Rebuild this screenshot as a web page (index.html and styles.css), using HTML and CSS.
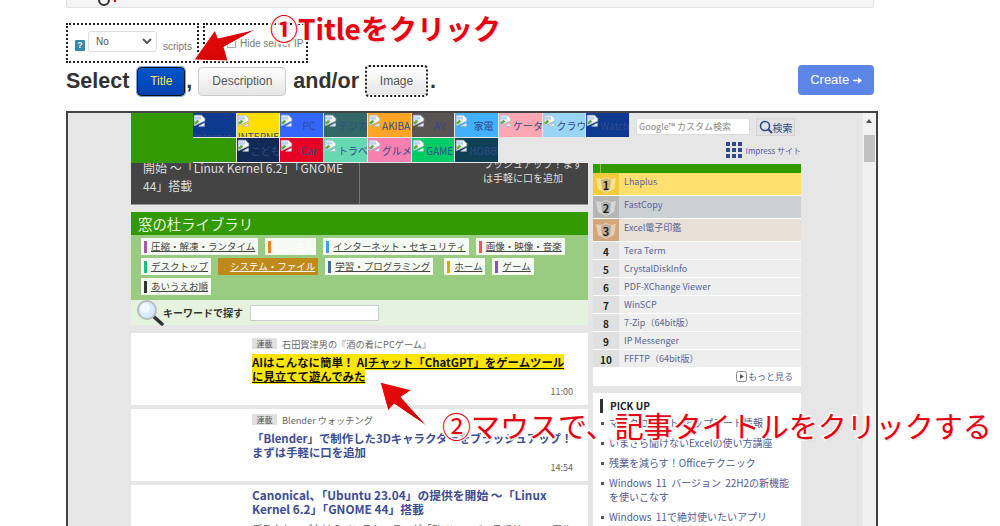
FILE: index.html
```html
<!DOCTYPE html>
<html lang="ja">
<head>
  <meta charset="UTF-8">
  <title>Titleをクリック</title>
  <link rel="stylesheet" href="styles.css">
</head>
<body>

<svg class="defs" width="0" height="0">
  <symbol id="broken" viewBox="0 0 16 16">
    <path d="M1.5 1.5h9l4 4v3l-13 6z" fill="#fff" stroke="#a9b4c4"/>
    <path d="M2 3h8v4H2z" fill="#b9d4f2"/>
    <path d="M2 13v-3l3-3 3 2-3 3z" fill="#5fae4c"/>
    <path d="M7 15l7-4v4z" fill="#fff" stroke="#a9b4c4"/>
  </symbol>
  <symbol id="medal" viewBox="0 0 26 22">
    <path d="M3 5l5 1 5-2 5 2 5-1-2 11-8 4-8-4z" fill="#fff" fill-opacity=".45"/>
    <path d="M8 7l5-2 5 2-1 9-4 3-4-3z" fill="#000" fill-opacity=".18"/>
  </symbol>
</svg>

<div class="page">
  <div class="topbar"><span class="topbar-icon"></span><span class="topbar-dot"></span></div>

  <div class="options">
    <div class="dotted opt-scripts">
      <span class="help">?</span>
      <span class="fake-select">No<svg width="10" height="6" viewBox="0 0 10 6"><path d="M1 1l4 4 4-4" fill="none" stroke="#555" stroke-width="2"/></svg></span>
      <span class="opt-label">scripts</span>
    </div>
    <div class="dotted opt-ip">
      <span class="check"></span>
      <span class="opt-label">Hide server IP</span>
    </div>
  </div>

  <div class="select-row">
    <span class="word">Select</span>
    <button class="btn btn-on">Title</button>
    <span class="word comma">,</span>
    <button class="btn btn-desc">Description</button>
    <span class="word and">and/or</span>
    <button class="btn btn-img">Image</button>
    <span class="word dot">.</span>
    <button class="create">Create
      <svg width="9" height="7" viewBox="0 0 11 8"><path d="M0 3h6V0l5 4-5 4V5H0z" fill="#fff"/></svg>
    </button>
  </div>

  <div class="frame">
    <div class="site">
      <div class="nav">
        <div class="nav-logo"></div>
        <div class="nav-tiles">
          <a class="tile t-watch"><svg class="bi"><use href="#broken"/></svg><span class="low">Internet</span></a>
          <a class="tile t-inet"><svg class="bi"><use href="#broken"/></svg><span class="low">INTERNET</span></a>
          <a class="tile t-pc"><svg class="bi"><use href="#broken"/></svg>PC</a>
          <a class="tile t-deji"><svg class="bi"><use href="#broken"/></svg>デジカ</a>
          <a class="tile t-akiba"><svg class="bi"><use href="#broken"/></svg>AKIBA</a>
          <a class="tile t-av"><svg class="bi"><use href="#broken"/></svg>AV</a>
          <a class="tile t-kaden"><svg class="bi"><use href="#broken"/></svg>家電</a>
          <a class="tile t-keita"><svg class="bi"><use href="#broken"/></svg>ケータ</a>
          <a class="tile t-cloud"><svg class="bi"><use href="#broken"/></svg>クラウ</a>
          <a class="tile t-watch"><svg class="bi"><use href="#broken"/></svg>Watch</a>
          <a class="tile t-green"></a>
          <a class="tile t-kodomo"><svg class="bi"><use href="#broken"/></svg>こども</a>
          <a class="tile t-car"><svg class="bi"><use href="#broken"/></svg>Car</a>
          <a class="tile t-trave"><svg class="bi"><use href="#broken"/></svg>トラベ</a>
          <a class="tile t-gourmet"><svg class="bi"><use href="#broken"/></svg>グルメ</a>
          <a class="tile t-game"><svg class="bi"><use href="#broken"/></svg>GAME</a>
          <a class="tile t-hobby"><svg class="bi"><use href="#broken"/></svg>HOBBY</a>
        </div>
        <div class="nav-right">
          <div class="nav-search">
            <span class="g-box">Google™ カスタム検索</span>
            <span class="g-btn">
              <svg width="14" height="14" viewBox="0 0 14 14"><circle cx="6" cy="6" r="4.5" fill="none" stroke="#2b4a8c" stroke-width="1.6"/><path d="M9.3 9.3L13 13" stroke="#2b4a8c" stroke-width="2"/></svg>検索
            </span>
          </div>
          <div class="impress">
            <span class="dots"><i></i><i></i><i></i><i></i><i></i><i></i><i></i><i></i><i></i></span>
            Impress サイト
          </div>
        </div>
      </div>

      <div class="cols">
        <div class="main">
          <div class="feature">
            <div class="f-left">開始 〜「Linux Kernel 6.2」「GNOME 44」搭載</div>
            <div class="f-right">ラッシュアップ！まず<br>は手軽に口を追加</div>
          </div>

          <div class="library">
            <h3>窓の杜ライブラリ</h3>
            <div class="tags">
              <a class="tag" style="--c:#a855a8">圧縮・解凍・ランタイム</a>
              <a class="tag tag-biz" style="--c:#e8821e">ビジネス</a>
              <a class="tag" style="--c:#3f9fe8">インターネット・セキュリティ</a>
              <a class="tag" style="--c:#ee5555">画像・映像・音楽</a>
              <a class="tag" style="--c:#22bb88">デスクトップ</a>
              <a class="tag tag-on" style="--c:#c08a1a">システム・ファイル</a>
              <a class="tag" style="--c:#44689c">学習・プログラミング</a>
              <a class="tag tag-home" style="--c:#c8b400">ホーム</a>
              <a class="tag" style="--c:#8a55b0">ゲーム</a>
              <a class="tag" style="--c:#333">あいうえお順</a>
            </div>
            <div class="kw">
              <svg class="kw-icon" width="30" height="26" viewBox="0 0 30 26"><path d="M17 16l9 8" stroke="#333" stroke-width="3.5" stroke-linecap="round"/><circle cx="11" cy="10" r="9" fill="#d8ecfa" stroke="#b8bcc0" stroke-width="2"/><circle cx="9" cy="8" r="5" fill="#f2faff"/></svg>
              <b>キーワードで探す</b>
              <span class="kw-input"></span>
            </div>
          </div>

          <div class="card">
            <div class="c-meta"><span class="c-tag">連載</span>石田賀津男の『酒の肴にPCゲーム』</div>
            <a class="c-title"><span class="hot">AIはこんなに簡単！ AIチャット「ChatGPT」をゲームツール<br>に見立てて遊んでみた</span></a>
            <div class="c-time">11:00</div>
          </div>
          <div class="card">
            <div class="c-meta"><span class="c-tag">連載</span>Blender ウォッチング</div>
            <a class="c-title">「Blender」で制作した3Dキャラクターをブラッシュアップ！<br>まずは手軽に口を追加</a>
            <div class="c-time">14:54</div>
          </div>
          <div class="card card-last">
            <a class="c-title">Canonical、「Ubuntu 23.04」の提供を開始 〜「Linux Kernel 6.2」「GNOME 44」搭載</a>
            <p class="c-desc">デスクトップ向けのインストーラーが「Flutter」ベースでリニューアル</p>
          </div>
        </div>

        <div class="side">
          <div class="rank-head"><i></i></div>
          <div class="rank r1"><b><svg class="medal"><use href="#medal"/></svg><span>1</span></b><a>Lhaplus</a></div>
          <div class="rank r2"><b><svg class="medal"><use href="#medal"/></svg><span>2</span></b><a>FastCopy</a></div>
          <div class="rank r3"><b><svg class="medal"><use href="#medal"/></svg><span>3</span></b><a>Excel電子印鑑</a></div>
          <div class="rank"><b>4</b><a>Tera Term</a></div>
          <div class="rank"><b>5</b><a>CrystalDiskInfo</a></div>
          <div class="rank"><b>6</b><a>PDF-XChange Viewer</a></div>
          <div class="rank"><b>7</b><a>WinSCP</a></div>
          <div class="rank"><b>8</b><a>7-Zip（64bit版）</a></div>
          <div class="rank"><b>9</b><a>IP Messenger</a></div>
          <div class="rank"><b>10</b><a>FFFTP（64bit版）</a></div>
          <div class="more"><svg class="play" width="11" height="11" viewBox="0 0 11 11"><rect x=".5" y=".5" width="10" height="10" rx="2" fill="none" stroke="#888"/><path d="M4 3l4 2.5L4 8z" fill="#555"/></svg>もっと見る</div>

          <div class="pick">
            <h4>PICK UP</h4>
            <ul>
              <li>マイクロソフト アップデート情報</li>
              <li>いまさら聞けないExcelの使い方講座</li>
              <li>残業を減らす！Officeテクニック</li>
              <li>Windows 11 バージョン 22H2の新機能<br>を使いこなす</li>
              <li>Windows 11で絶対使いたいアプリ</li>
            </ul>
          </div>
        </div>
      </div>
    </div>

    <div class="scrollbar"><span class="up"></span><span class="thumb"></span></div>
  </div>
</div>

<!-- annotations on top of the screenshot -->
<svg class="arrows" width="1000" height="526" viewBox="0 0 1000 526">
  <defs>
    <linearGradient id="redg" x1="0" y1="0" x2="1" y2="1">
      <stop offset="0" stop-color="#ee0a0a"/>
      <stop offset="1" stop-color="#c80404"/>
    </linearGradient>
  </defs>
  <polygon points="194,60 215,30 218,38 257,29 224,47 228,61" fill="url(#redg)" stroke="#fff" stroke-width="1"/>
  <polygon points="380,382 412,390 401,397 428,427 394,404 388,411" fill="url(#redg)" stroke="#fff" stroke-width="1"/>
</svg>
<div class="note note-1">①Titleをクリック</div>
<div class="note note-2">②マウスで、記事タイトルをクリックする</div>

</body>
</html>
```

FILE: styles.css
```css
* {
  box-sizing: border-box;
}

html, body {
  margin: 0;
  padding: 0;
  height: 526px;
  overflow: hidden;
  background: #fff;
}

body {
  position: relative;
  font-family: "Liberation Sans", Arial, sans-serif;
  color: #333;
}

.defs {
  position: absolute;
}

.page {
  width: 874px;
  padding-left: 66px;
}

/* top of the form */
.topbar {
  height: 8px;
  background: #f5f5f5;
  border: 1px solid #e3e3e3;
  border-top: none;
  border-radius: 0 0 3px 3px;
  position: relative;
}

.topbar-icon {
  position: absolute;
  left: 31px;
  top: -6px;
  width: 12px;
  height: 12px;
  border: 2px solid #333;
  border-radius: 50%;
}

.topbar-dot {
  position: absolute;
  left: 47px;
  top: 0;
  width: 2px;
  height: 2px;
  background: #e00;
}

.options {
  display: flex;
  margin-top: 15px;
  height: 40px;
}

.dotted {
  border: 2px dotted #222;
  display: flex;
  align-items: center;
  font-size: 10px;
  color: #777;
}

.opt-scripts {
  width: 133px;
  padding: 6px 0 0 7px;
  position: relative;
}

.opt-ip {
  width: 105px;
  padding: 0 0 0 22px;
  margin-left: 4px;
}

.help {
  width: 10px;
  height: 11px;
  background: #3a87ad;
  color: #fff;
  font-size: 9px;
  font-weight: bold;
  text-align: center;
  line-height: 11px;
  border-radius: 1px;
  margin-top: -1px;
}

.fake-select {
  width: 69px;
  height: 21px;
  margin: -10px 0 0 3px;
  padding: 0 4px 0 7px;
  background: #fff;
  border: 1px solid #ddd;
  border-radius: 3px;
  display: flex;
  align-items: center;
  justify-content: space-between;
  color: #555;
  font-size: 10px;
}

.opt-scripts .opt-label {
  margin-left: 6px;
  margin-top: 0;
}

.check {
  width: 9px;
  height: 9px;
  border: 1px solid #aaa;
  margin-right: 4px;
}

.select-row {
  display: flex;
  align-items: center;
  margin-top: 1px;
  height: 34px;
}

.word {
  font-size: 21.5px;
  font-weight: bold;
  color: #333;
}

.btn {
  height: 29px;
  font: 12px "Liberation Sans", Arial, sans-serif;
  border-radius: 4px;
  border: 1px solid #ccc;
  color: #555;
  background: linear-gradient(#fff, #e6e6e6);
  padding: 0;
}

.btn-on {
  width: 48px;
  margin-left: 8px;
  color: #ffe84d;
  background: linear-gradient(#0055cc, #0040b0);
  border: 1px solid #111;
  box-shadow: 0 0 0 1px #7fa6dd;
}

.comma {
  margin-left: 1px;
}

.btn-desc {
  width: 88px;
  margin-left: 6px;
}

.and {
  margin-left: 7px;
}

.btn-img {
  width: 63px;
  height: 32px;
  margin-left: 6px;
  border: 2px dotted #222;
}

.dot {
  margin-left: 2px;
}

.create {
  margin: -3px 0 0 auto;
  width: 76px;
  height: 30px;
  border: none;
  border-radius: 4px;
  background: #5b86e5;
  color: #fff;
  font: 13px "Liberation Sans", Arial, sans-serif;
  padding: 0;
}

/* the page inside the frame */
.frame {
  display: flex;
  width: 812px;
  height: 420px;
  margin-top: 13px;
  border: 2px solid #444;
  border-bottom: none;
  background: #e6e6e6;
  overflow: hidden;
  font-family: "Noto Sans CJK JP", "Liberation Sans", sans-serif;
}

.site {
  width: 797px;
  padding-left: 63px;
}

.scrollbar {
  width: 13px;
  background: #f1f1f1;
  position: relative;
  padding: 22px 1px 0;
}

.up {
  position: absolute;
  left: 3px;
  top: 6px;
  border: 3px solid transparent;
  border-top: none;
  border-bottom: 4px solid #505050;
}

.thumb {
  display: block;
  height: 27px;
  background: #c1c1c1;
}

.nav {
  display: flex;
  height: 50px;
  width: 670px;
  position: relative;
  z-index: 2;
}

.nav-logo {
  width: 62px;
  height: 50px;
  background: #339900;
}

.nav-tiles {
  display: grid;
  grid-template-columns: repeat(10, 1fr);
  grid-auto-rows: 24px;
  gap: 1px;
  width: 436px;
  align-content: start;
}

.tile {
  position: relative;
  display: block;
  overflow: hidden;
  padding: 6px 0 0 14px;
  color: #334a8c;
  font-size: 10px;
  line-height: 14px;
  white-space: nowrap;
  text-align: center;
}

.tile .low {
  position: absolute;
  left: 1px;
  top: 17px;
}

.bi {
  position: absolute;
  left: 0;
  top: 1px;
  width: 13px;
  height: 13px;
}

.t-watch { background: #0d3a8e; }
.t-inet { background: #ffde00; }
.t-pc { background: #3366ff; }
.t-deji { background: #336666; }
.t-akiba { background: #ffa526; }
.t-av { background: #595353; }
.t-kaden { background: #40b0ff; }
.t-keita { background: #ffa6b3; }
.t-cloud { background: #99d6f5; }
.t-green { background: #339900; }
.t-kodomo { background: #102a55; }
.t-car { background: #e60026; }
.t-trave { background: #66d9b3; }
.t-gourmet { background: #f780b0; }
.t-game { background: #00cc66; }
.t-hobby { background: #0d4055; }

.nav-right {
  flex: 1;
  padding: 5px 0 0 7px;
}

.nav-search {
  display: flex;
  gap: 6px;
}

.g-box {
  width: 114px;
  height: 17px;
  background: #fff;
  border: 1px solid #ddd;
  color: #888;
  font-size: 9px;
  line-height: 15px;
  padding-left: 2px;
}

.g-btn {
  width: 39px;
  height: 18px;
  background: #e2e2e2;
  border: 1px solid #d4d4d4;
  font-size: 10px;
  color: #2b4a8c;
  display: flex;
  align-items: center;
  justify-content: center;
}

.impress {
  display: flex;
  align-items: center;
  justify-content: flex-end;
  gap: 4px;
  margin: 6px 0 0 0;
  font-size: 8px;
  color: #4a5a94;
}

.dots {
  display: grid;
  grid-template-columns: repeat(3, 4px);
  gap: 2px;
}

.dots i {
  height: 4px;
  background: #2f4a8c;
}

.cols {
  display: flex;
  width: 670px;
  gap: 5px;
}

.main {
  width: 457px;
}

.side {
  width: 208px;
  padding-top: 1px;
}

.feature {
  display: flex;
  height: 42px;
  background: #444;
  color: #ddd;
  overflow: hidden;
  border-bottom: 1px solid #999;
}

.f-left {
  width: 228px;
  padding: 0 12px;
  margin-top: -4px;
  font-size: 12px;
  line-height: 18px;
}

.f-right {
  flex: 1;
  padding-left: 123px;
  margin-top: -6px;
  border-left: 1px solid #777;
  font-size: 10px;
  line-height: 14px;
  white-space: nowrap;
}

.library {
  margin-top: 7px;
  background: #99cc80;
}

.library h3 {
  margin: 0;
  height: 23px;
  padding-left: 7px;
  background: #339900;
  color: #e6f5dc;
  font-size: 14.4px;
  font-weight: normal;
  line-height: 23px;
}

.tags {
  display: flex;
  flex-wrap: wrap;
  align-content: flex-start;
  gap: 3px 7px;
  height: 65px;
  padding: 3px 0 0 10px;
}

.tag {
  height: 17px;
  padding: 0 3px 0 3px;
  background: #f5faf2;
  color: #444;
  font-size: 9.5px;
  line-height: 17px;
  text-decoration: underline;
  white-space: nowrap;
  display: flex;
  align-items: center;
}

.tag::before {
  content: "";
  width: 3px;
  height: 12px;
  margin-right: 4px;
  background: var(--c);
}

.tag-biz {
  color: #fff;
}

.tag-on {
  background: var(--c);
  color: #fff;
  padding-left: 5px;
}

.tag-home {
  margin-left: 4px;
}

.kw {
  display: flex;
  align-items: center;
  height: 25px;
  padding-left: 5px;
  background: #e5f2dd;
  font-size: 10px;
  color: #333;
}

.kw-icon {
  margin-right: -3px;
}

.kw-input {
  width: 129px;
  height: 16px;
  margin-left: 7px;
  background: #fff;
  border: 1px solid #ccc;
}

.card {
  height: 72px;
  margin-top: 8px;
  padding: 4px 15px 0 121px;
  background: #fff;
}

.card + .card {
  margin-top: 4px;
}

.c-meta {
  display: flex;
  align-items: center;
  height: 13px;
  font-size: 9.2px;
  color: #666;
}

.c-tag {
  width: 25px;
  height: 11px;
  margin-right: 5px;
  background: #e0e0e0;
  color: #555;
  font-size: 8px;
  line-height: 11px;
  text-align: center;
}

.c-title {
  display: block;
  margin: 5px -8px 0 0;
  color: #3d4d8f;
  font-size: 11.4px;
  font-weight: bold;
  line-height: 14px;
}

.hot {
  color: #111;
  background: #ffe600;
  text-decoration: underline;
}

.c-time {
  margin-top: 3px;
  text-align: right;
  font-size: 9px;
  line-height: 12px;
  color: #666;
}

.card-last {
  height: 60px;
  padding-top: 3px;
}

.card-last .c-title {
  margin: 0;
  font-size: 11.8px;
}

.c-desc {
  margin: 5px 0 0;
  font-size: 10px;
  color: #666;
  white-space: nowrap;
  overflow: hidden;
}

.rank-head {
  height: 9px;
  background: #339900;
  position: relative;
}

.rank-head i {
  position: absolute;
  left: 7px;
  top: 0;
  width: 1px;
  height: 9px;
  background: #8fbf3f;
}

.rank {
  display: flex;
  height: 18px;
  background: #eee;
  border-bottom: 1px solid #fff;
  font-size: 9px;
  line-height: 17px;
  color: #5a6596;
}

.rank b {
  position: relative;
  width: 26px;
  background: #e0e0e0;
  color: #222;
  text-align: center;
  line-height: 20px;
  font-size: 10px;
  margin-right: 5px;
}

.rank b span {
  position: relative;
}

.medal {
  position: absolute;
  left: 0;
  top: 0;
  width: 26px;
  height: 22px;
}

.rank.r1, .rank.r2, .rank.r3 {
  height: 23px;
  line-height: 18px;
}

.rank.r1 b, .rank.r2 b, .rank.r3 b {
  line-height: 24px;
  font-size: 11px;
}

.r1 { background: #ffe06e; }
.r1 b { background: #f2cb3a; }
.r2 { background: #ccd1d4; }
.r2 b { background: #b4b6b6; }
.r3 { background: #e8e0d6; }
.r3 b { background: #d3a67c; }

.more {
  height: 18px;
  background: #fff;
  text-align: right;
  padding-right: 8px;
  font-size: 9px;
  line-height: 18px;
  color: #5a6596;
}

.play {
  margin-right: 1px;
  vertical-align: -2px;
}

.pick {
  margin-top: 7px;
  height: 140px;
  padding: 6px 6px 0 7px;
  background: #fff;
}

.pick h4 {
  margin: 0 0 3px;
  padding-left: 7px;
  border-left: 3px solid #333;
  font-size: 10px;
  line-height: 14px;
  color: #222;
}

.pick ul {
  margin: 0;
  padding: 0;
  list-style: none;
}

.pick li {
  position: relative;
  padding-left: 9px;
  margin-bottom: 6px;
  font-size: 10px;
  line-height: 14px;
  word-spacing: 2px;
  color: #4f5b94;
}

.pick li::before {
  content: "";
  position: absolute;
  left: 1px;
  top: 6px;
  width: 3px;
  height: 3px;
  background: #555;
}

/* red notes */
.arrows {
  position: absolute;
  left: 0;
  top: 0;
}

.note {
  position: absolute;
  color: #e60012;
  font-family: "Noto Sans CJK JP", "Liberation Sans", sans-serif;
  font-weight: bold;
  white-space: nowrap;
  -webkit-text-stroke: 3px #fff;
  paint-order: stroke fill;
  text-shadow: 1px 1px 2px rgba(0, 0, 0, 0.15);
}

.note-1 {
  left: 270px;
  top: 8px;
  font-size: 28px;
  line-height: 40px;
}

.note-2 {
  left: 442px;
  top: 404px;
  font-size: 29px;
  line-height: 42px;
  font-weight: normal;
}
```
